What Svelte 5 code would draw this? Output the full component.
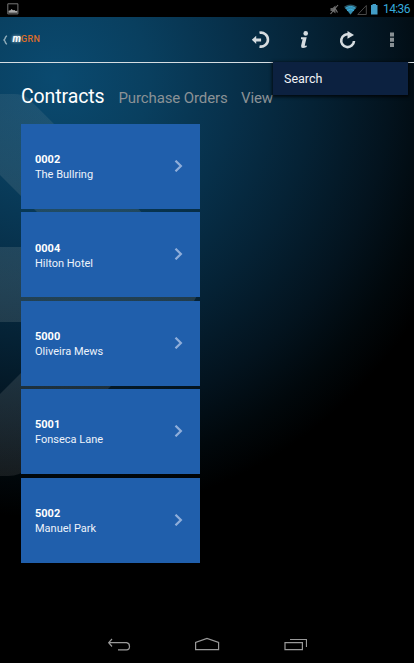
<script>
  const contracts = [
    { code: '0002', name: 'The Bullring' },
    { code: '0004', name: 'Hilton Hotel' },
    { code: '5000', name: 'Oliveira Mews' },
    { code: '5001', name: 'Fonseca Lane' },
    { code: '5002', name: 'Manuel Park' }
  ];
</script>

<div class="screen">
  <svg class="backdrop" width="414" height="646" viewBox="0 17 414 646" aria-hidden="true">
    <defs>
      <linearGradient id="arrow" x1="0" y1="94" x2="0" y2="476" gradientUnits="userSpaceOnUse">
        <stop offset="0" stop-color="#8499a0" stop-opacity=".15" />
        <stop offset=".5" stop-color="#778a90" stop-opacity=".25" />
        <stop offset="1" stop-color="#999" stop-opacity=".14" />
      </linearGradient>
    </defs>
    <path fill="url(#arrow)" d="M0 94H14Q22 94 28 98L54 124 192 263Q206 282 194 301L110 387 30 467Q20 476 8 476H0V394L72 322H0V247H72L0 175Z" />
  </svg>

  <div class="status">
    <svg width="12" height="12" viewBox="0 0 12 12"><path d="M.8.8h10.1v10.1H.8z" fill="none" stroke="#777" /><path d="M1.500 9.800V7.800l2-.6 1-1.200L6 7.200l1.500-.2 1 1 1.800-.2v2z" fill="#aaa" /></svg>
    <div class="tray">
      <svg width="52" height="14" viewBox="329 1 52 14">
        <path d="M330.500 7h2l3-2.500v8l-3-2.500h-2z" fill="#666" />
        <path d="m330.500 13 7.500-9M335.500 8l2 3.500" stroke="#777" stroke-width="1.100" fill="none" />
        <path d="M344 5.800q6.500-4.700 13 0l-6.500 8z" fill="#285262" />
        <path d="M345.800 7.300q4.700-3.200 9.400 0l-4.700 6z" fill="#348fb3" />
        <path d="M345.500 7.300q5-3.600 10 0M347 9.500q3.500-2.500 7 0" fill="none" stroke="#3bb1df" stroke-width="1" />
        <path d="M366.300 4.500v9h-8.500z" fill="none" stroke="#494949" />
        <path d="M371 4h1.500V3h3.500v1h1.500v9.500H371z" fill="#429dc7" />
      </svg>
      <span class="clock">14:36</span>
    </div>
  </div>

  <header>
    <div class="brand">
      <svg width="7" height="10" viewBox="0 0 7 10"><path d="M4.800.600 3.500 2.200q-.200 1.800-1.500 2.800Q3.300 6 3.500 7.800l1.300 1.600" fill="none" stroke="#92aebb" stroke-width="1.400" /></svg>
      <span class="logo"><i>m</i><b>GRN</b></span>
    </div>
    <svg class="actions" width="164" height="20" viewBox="250 30 164 20">
      <g fill="none" stroke="#d6dce0" stroke-width="2.600">
        <path d="M259.500 32.800A7 7 0 1 1 259.500 46.500" />
        <path d="M349.600 34.600A6.400 6.400 0 1 0 354 41" />
      </g>
      <path d="M251.800 39.800l4.400-4v2.600h4.900v3h-4.900v2.500zM347.500 30.900l6.500 4.100-6.500 3.700z" fill="#d6dce0" />
      <circle cx="305.700" cy="33.400" r="2.300" fill="#d6dce0" />
      <path d="M301 37.200h5.700l-1.900 8.100q-.2 1 1.900.1v1.700q-6.200 2.400-5.600-1.400l1.500-6.400H301z" fill="#d6dce0" />
      <path d="M390 32.500h4v4h-4zm0 5.300h4v4h-4zm0 5.300h4v4h-4z" fill="#899094" />
    </svg>
    <div class="menu">Search</div>
  </header>

  <nav><span class="current">Contracts</span><span class="orders">Purchase Orders</span><span class="view">View</span></nav>

  <main>
    {#each contracts as contract}
      <article>
        <div><strong>{contract.code}</strong><span>{contract.name}</span></div>
        <svg width="9" height="12" viewBox="0 0 9 12"><path d="m1.500.700 5.400 5.300-5.400 5.300" fill="none" stroke="#8faeda" stroke-width="2.200" /></svg>
      </article>
    {/each}
  </main>

  <footer>
    <svg width="200" height="14" viewBox="107 637 200 14" fill="none" stroke="#999" stroke-width="1.200">
      <path d="M112 639l-3.300 3.700 3.300 3.800M109 642.700h17.500q3 .4 3 3.700t-3 3.400H118" />
      <path d="M195.600 649.700v-7.300L207 638.400l11.600 4v7.300z" />
      <path d="M285 642.600h17.400v7H285zM290 639.500h16.500v7.500" />
    </svg>
  </footer>
</div>

<style>
  :global(body) { margin: 0; background: #000; }
  .screen {
    position: relative;
    width: 414px;
    height: 663px;
    overflow: hidden;
    display: flex;
    flex-direction: column;
    font-family: Roboto, sans-serif;
    color: #fff;
    background: radial-gradient(ellipse 430px 440px at 55px 78px, #0a4a70 0%, #093f5f 22%, #07304a 42%, #052235 60%, #03131e 78%, #01080c 90%, #000 100%);
  }
  svg { display: block; flex: none; }
  .backdrop { position: absolute; left: 0; top: 17px; }
  .status, header, nav, main, footer { position: relative; box-sizing: border-box; flex: none; }
  .status {
    height: 17px;
    background: #000;
    display: flex;
    align-items: center;
    justify-content: space-between;
    padding: 0 4px 0 7px;
  }
  .tray { display: flex; align-items: center; gap: 2px; }
  .clock { color: #35aadb; font-size: 12px; letter-spacing: -.6px; line-height: 17px; width: 27px; padding-top: 1px; white-space: nowrap; }
  header {
    z-index: 1;
    height: 46px;
    border-bottom: 1px solid #d5dde2;
    display: flex;
    align-items: flex-start;
    justify-content: space-between;
  }
  .brand { display: flex; align-items: center; padding: 16px 0 0 2px; gap: 3.5px; height: 12px; }
  .brand svg { margin-top: 2px; }
  .logo { display: flex; align-items: baseline; line-height: 12px; }
  .logo i { font-weight: 700; font-size: 10px; width: 8.5px; color: #fff; text-shadow: 0 0 3px #dbe8ee; }
  .logo b { font-weight: 500; font-size: 9px; letter-spacing: .3px; color: #df6d29; }
  .actions { margin-top: 13px; }
  .menu {
    position: absolute;
    left: 273px;
    top: 45px;
    width: 135px;
    height: 33px;
    box-sizing: border-box;
    padding-left: 11px;
    font-size: 12.5px;
    line-height: 34px;
    color: #f0f2f6;
    background: #0c2140;
    box-shadow: 0 1px 3px 1px #000b;
  }
  nav { height: 61px; display: flex; align-items: baseline; padding: 22px 0 0 21px; color: #8b9296; font-size: 15px; letter-spacing: -.12px; white-space: nowrap; }
  .current { color: #fff; font-size: 19.5px; letter-spacing: -.1px; line-height: 24px; width: 97.500px; }
  .orders { width: 122.500px; }
  main { width: 179px; margin-left: 21px; display: flex; flex-direction: column; gap: 3.4px; }
  article {
    height: 85px;
    box-sizing: border-box;
    padding: 0 17px 0 14px;
    background: #205fac;
    display: flex;
    align-items: center;
    justify-content: space-between;
  }
  article div { display: flex; flex-direction: column; font-size: 11px; line-height: 15px; padding-top: 1.6px; }
  article span { color: #edf3fb; }
  article svg { margin-top: -1px; }
  footer { margin-top: auto; height: 38px; display: flex; justify-content: center; padding-top: 12px; }
</style>
